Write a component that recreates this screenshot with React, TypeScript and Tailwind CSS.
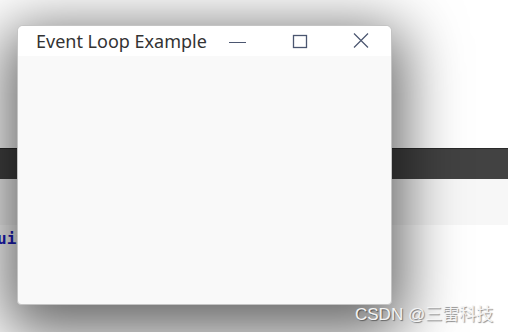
export default function App() {
  return (
    <div className="relative w-[508px] h-[332px] overflow-hidden bg-white">
      {/* desktop behind the window */}
      <div className="flex flex-col">
        <div className="h-[148px] bg-white" />
        <div className="h-[31px] bg-[#424242] border-t border-[#2a2a2a]" />
        <div className="h-[46px] bg-[#f7f7f7] flex items-end">
          <span className="font-['DejaVu_Sans_Mono',monospace] font-bold text-[16px] leading-none text-[#1c1cc0] -ml-[3px] mb-[-22px]">
            uit
          </span>
        </div>
        <div className="flex-1 bg-white" />
      </div>

      {/* the window */}
      <div className="absolute left-[17px] top-[25px] w-[375px] h-[280px] flex flex-col rounded-t-[6px] rounded-b-[4px] border border-[#c4c4c4] bg-[#f9f9f9] shadow-[0_16px_60px_12px_rgba(0,0,0,0.6)] overflow-hidden">
        <div className="h-[30px] bg-white flex items-center font-['Noto_Sans',sans-serif] text-[#333]">
          <span className="ml-[18px] text-[18px] leading-none">Event Loop Example</span>
          <div className="ml-auto flex items-center">
            <svg width="60" height="30" viewBox="0 0 60 30" className="text-[#4b5670]">
              <line x1="18" y1="16.5" x2="35" y2="16.5" stroke="currentColor" strokeWidth="1.2" />
            </svg>
            <svg width="60" height="30" viewBox="0 0 60 30" className="text-[#4b5670]">
              <rect x="22.5" y="9.5" width="13" height="12" fill="none" stroke="currentColor" strokeWidth="1.3" />
            </svg>
            <svg width="60" height="30" viewBox="0 0 60 30" className="text-[#4b5670]">
              <path d="M23 7.5 L37 21.5 M37 7.5 L23 21.5" stroke="currentColor" strokeWidth="1.2" />
            </svg>
          </div>
        </div>
        <div className="flex-1" />
      </div>

      {/* watermark */}
      <div className="absolute left-[355px] top-[302px] font-['Liberation_Sans','Noto_Sans_CJK_SC',sans-serif] text-[17px] text-[#f4f4f4] [text-shadow:1px_1px_1px_rgba(0,0,0,0.45)]">
        CSDN @三雷科技
      </div>
    </div>
  );
}
